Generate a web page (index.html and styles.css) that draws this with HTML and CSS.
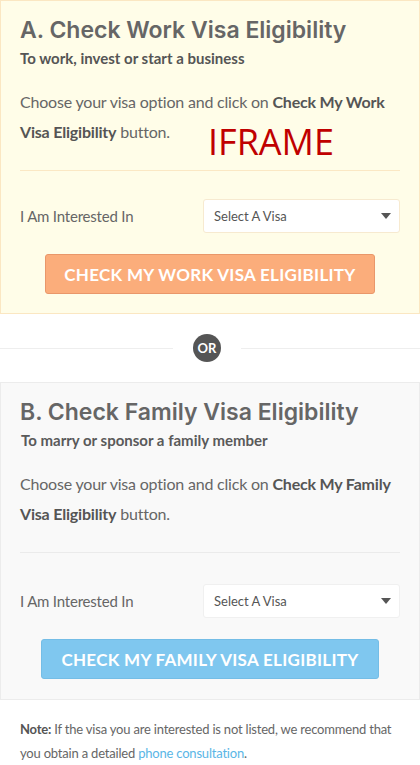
FILE: index.html
```html
<!DOCTYPE html>
<html lang="en">
<head>
<meta charset="utf-8">
<title>Check Visa Eligibility</title>
<link rel="stylesheet" href="styles.css">
</head>
<body>
<section class="card card-work">
  <h2 class="card-title">A. Check Work Visa Eligibility</h2>
  <p class="card-sub">To work, invest or start a business</p>
  <p class="card-text">Choose your visa option and click on <b>Check My Work Visa Eligibility</b> button.</p>
  <hr class="card-rule">
  <div class="field-row">
    <span class="field-label">I Am Interested In</span>
    <div class="select"><span>Select A Visa</span><i class="caret"></i></div>
  </div>
  <div class="btn-wrap"><button class="btn btn-orange">CHECK MY WORK VISA ELIGIBILITY</button></div>
  <span class="iframe-label">IFRAME</span>
</section>

<div class="or-row">
  <span class="or-line"></span>
  <span class="or-badge">OR</span>
  <span class="or-line"></span>
</div>

<section class="card card-family">
  <h2 class="card-title">B. Check Family Visa Eligibility</h2>
  <p class="card-sub card-sub-b">To marry or sponsor a family member</p>
  <p class="card-text">Choose your visa option and click on <b>Check My Family Visa Eligibility</b> button.</p>
  <hr class="card-rule">
  <div class="field-row">
    <span class="field-label">I Am Interested In</span>
    <div class="select"><span>Select A Visa</span><i class="caret"></i></div>
  </div>
  <div class="btn-wrap"><button class="btn btn-blue">CHECK MY FAMILY VISA ELIGIBILITY</button></div>
</section>

<p class="note"><b>Note:</b> If the visa you are interested is not listed, we recommend that you obtain a detailed <a href="#">phone consultation</a>.</p>
</body>
</html>
```
FILE: styles.css
```css
* { box-sizing: border-box; }
html, body { margin: 0; padding: 0; background: #fff; }
body {
  width: 420px;
  font-family: Lato, "Liberation Sans", sans-serif;
  color: #666;
}
.card {
  position: relative;
  padding: 13px 19px 19px;
  border: 1px solid #eee;
}
.card-work {
  background: #fffde8;
  border-color: #fbe7c2;
}
.card-family {
  background: #f9f9f9;
  border-color: #ececec;
  padding-bottom: 20px;
}
.card-title {
  margin: 0;
  font-family: Inter, Lato, sans-serif;
  font-size: 23px;
  line-height: 32px;
  font-weight: 600;
  color: #666;
}
.card-sub {
  margin: 2px 0 0;
  font-size: 15px;
  line-height: 20px;
  font-weight: 700;
  color: #555;
}
.card-sub-b { padding-left: 1px; color: #5a5a5a; }
.card-text {
  margin: 19px 0 0;
  font-size: 16px;
  line-height: 30px;
  letter-spacing: -0.2px;
  color: #666;
}
.card-text b { font-weight: 700; color: #555; }
.card-rule {
  margin: 23px 0 0;
  border: 0;
  border-top: 1px solid #fbe8c4;
  height: 0;
}
.card-family .card-rule { border-top-color: #ebebeb; }
.field-row {
  display: flex;
  align-items: center;
  margin-top: 28px;
}
.card-family .field-row { margin-top: 31px; }
.field-label {
  flex: 1;
  font-size: 15px;
  letter-spacing: -0.2px;
  color: #666;
}
.select {
  flex: 0 0 197px;
  height: 34px;
  display: flex;
  align-items: center;
  justify-content: space-between;
  padding: 0 8px 0 10px;
  background: #fff;
  border: 1px solid #f7ead0;
  border-radius: 3px;
  font-size: 13px;
  color: #555;
}
.card-family .select { border-color: #f0f0f0; }
.caret {
  width: 0; height: 0;
  border-left: 5px solid transparent;
  border-right: 5px solid transparent;
  border-top: 6px solid #555;
}
.btn-wrap {
  display: flex;
  justify-content: center;
  margin-top: 21px;
}
.btn {
  height: 40px;
  padding: 0 18px;
  border-radius: 3px;
  font-family: inherit;
  font-size: 17px;
  font-weight: 700;
  color: #fff;
  letter-spacing: 0.3px;
}
.btn-orange { background: #fbad7b; border: 1px solid #e9976a; }
.btn-blue { background: #7fc7ef; border: 1px solid #74bde6; padding: 0 19px; }
.iframe-label {
  position: absolute;
  left: 207px;
  top: 120px;
  font-family: "Open Sans", sans-serif;
  font-size: 36px;
  line-height: 42px;
  color: #c00000;
}
.or-row {
  display: flex;
  align-items: center;
  height: 68px;
}
.or-line { flex: 1; height: 1px; background: #eee; }
.or-row .or-line:first-child { flex: 0 0 173px; }
.or-badge {
  width: 28px; height: 28px;
  margin: 0 20px;
  border-radius: 50%;
  background: #555;
  color: #fff;
  font-size: 13px;
  font-weight: 700;
  display: flex;
  align-items: center;
  justify-content: center;
}
.note {
  margin: 0;
  padding: 17px 20px 0;
  font-size: 13px;
  line-height: 24px;
  letter-spacing: -0.2px;
  color: #666;
}
.note b { color: #555; font-weight: 700; }
.note a { color: #5ab6e6; text-decoration: none; }
```
